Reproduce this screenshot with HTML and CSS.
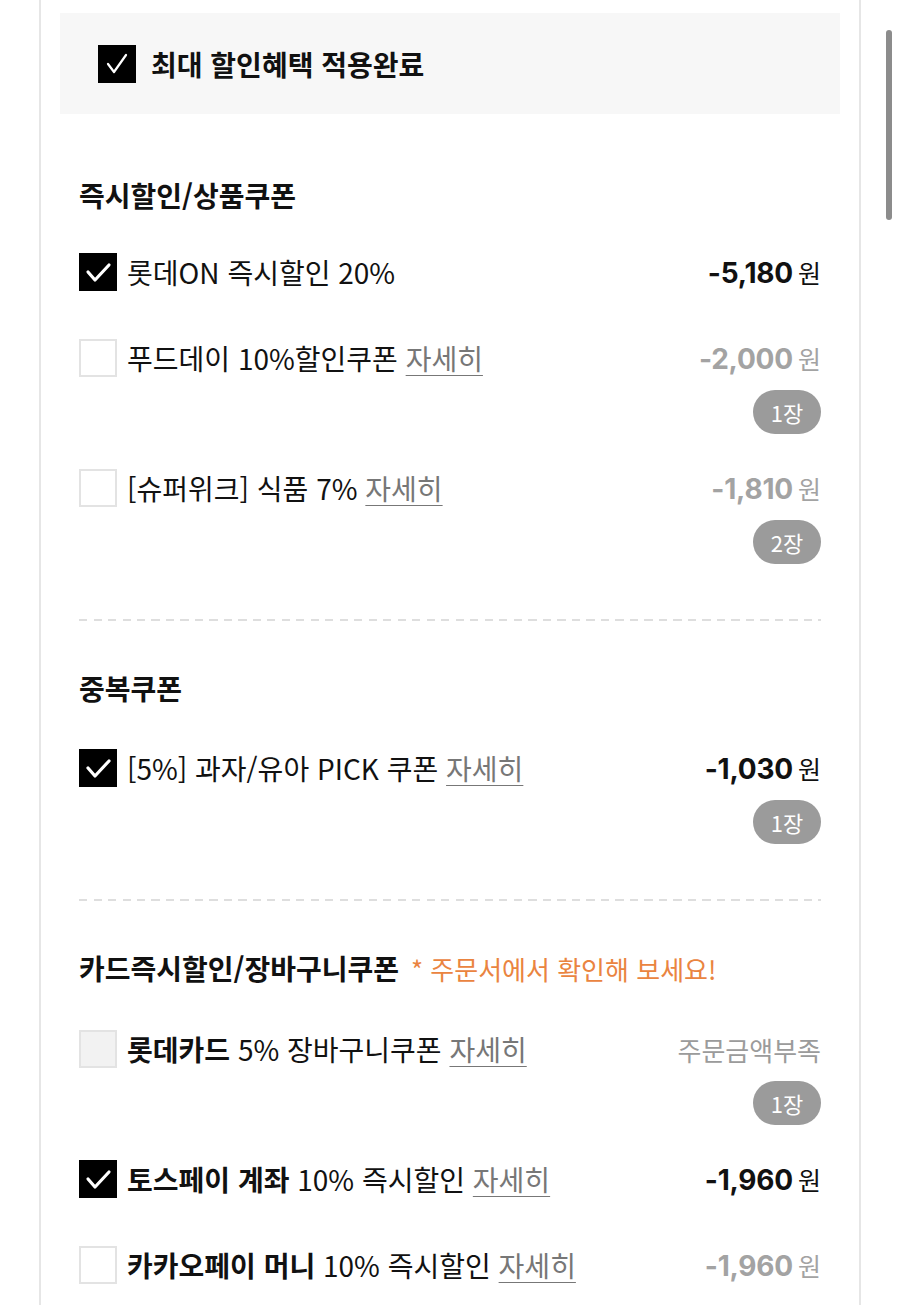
FILE: index.html
```html
<!DOCTYPE html>
<html lang="ko">
<head>
    <meta charset="UTF-8">
    <meta name="viewport" content="width=device-width, initial-scale=1.0">
    <title>할인 쿠폰 적용</title>
    <link rel="stylesheet" href="styles.css">
</head>
<body>

    <div class="panel">

        <div class="best-box">
            <span class="check is-on">
                <svg viewBox="0 0 38 38"><polyline points="10,19 16,27 28,10" fill="none" stroke="#fff" stroke-width="2.2" stroke-linecap="round" stroke-linejoin="round"/></svg>
            </span>
            <strong class="best-text">최대 할인혜택 적용완료</strong>
        </div>

        <!-- 즉시할인 / 상품쿠폰 -->
        <section class="group first">
            <h2 class="group-title">즉시할인/상품쿠폰</h2>
            <ul class="coupon-list">
                <li class="coupon">
                    <div class="coupon-row">
                        <span class="check is-on">
                            <svg viewBox="0 0 38 38"><polyline points="9,19 16,27 30,12" fill="none" stroke="#fff" stroke-width="3.2" stroke-linecap="round" stroke-linejoin="round"/></svg>
                        </span>
                        <span class="coupon-name">롯데ON 즉시할인 20%</span>
                        <span class="price"><b>-5,180</b>원</span>
                    </div>
                </li>
                <li class="coupon">
                    <div class="coupon-row">
                        <span class="check"></span>
                        <span class="coupon-name">푸드데이 10%할인쿠폰 <a href="#" class="more">자세히</a></span>
                        <span class="price is-off"><b>-2,000</b>원</span>
                    </div>
                    <div class="count-line"><span class="count">1장</span></div>
                </li>
                <li class="coupon">
                    <div class="coupon-row">
                        <span class="check"></span>
                        <span class="coupon-name">[슈퍼위크] 식품 7% <a href="#" class="more">자세히</a></span>
                        <span class="price is-off"><b>-1,810</b>원</span>
                    </div>
                    <div class="count-line"><span class="count">2장</span></div>
                </li>
            </ul>
        </section>

        <hr class="dash">

        <!-- 중복쿠폰 -->
        <section class="group">
            <h2 class="group-title">중복쿠폰</h2>
            <ul class="coupon-list">
                <li class="coupon">
                    <div class="coupon-row">
                        <span class="check is-on">
                            <svg viewBox="0 0 38 38"><polyline points="9,19 16,27 30,12" fill="none" stroke="#fff" stroke-width="3.2" stroke-linecap="round" stroke-linejoin="round"/></svg>
                        </span>
                        <span class="coupon-name">[5%] 과자/유아 PICK 쿠폰 <a href="#" class="more">자세히</a></span>
                        <span class="price"><b>-1,030</b>원</span>
                    </div>
                    <div class="count-line"><span class="count">1장</span></div>
                </li>
            </ul>
        </section>

        <hr class="dash">

        <!-- 카드즉시할인 / 장바구니쿠폰 -->
        <section class="group">
            <h2 class="group-title">카드즉시할인/장바구니쿠폰 <span class="notice">* 주문서에서 확인해 보세요!</span></h2>
            <ul class="coupon-list">
                <li class="coupon">
                    <div class="coupon-row">
                        <span class="check is-disabled"></span>
                        <span class="coupon-name"><strong>롯데카드</strong> 5% 장바구니쿠폰 <a href="#" class="more">자세히</a></span>
                        <span class="shortage">주문금액부족</span>
                    </div>
                    <div class="count-line"><span class="count">1장</span></div>
                </li>
                <li class="coupon">
                    <div class="coupon-row">
                        <span class="check is-on">
                            <svg viewBox="0 0 38 38"><polyline points="9,19 16,27 30,12" fill="none" stroke="#fff" stroke-width="3.2" stroke-linecap="round" stroke-linejoin="round"/></svg>
                        </span>
                        <span class="coupon-name"><strong>토스페이 계좌</strong> 10% 즉시할인 <a href="#" class="more">자세히</a></span>
                        <span class="price"><b>-1,960</b>원</span>
                    </div>
                </li>
                <li class="coupon">
                    <div class="coupon-row">
                        <span class="check"></span>
                        <span class="coupon-name"><strong>카카오페이 머니</strong> 10% 즉시할인 <a href="#" class="more">자세히</a></span>
                        <span class="price is-off"><b>-1,960</b>원</span>
                    </div>
                </li>
            </ul>
        </section>

    </div>

    <div class="scroll-thumb"></div>

</body>
</html>
```

FILE: styles.css
```css
body {
    font-family: "Noto Sans CJK KR", "Noto Sans", sans-serif;
    background-color: #fff;
    color: #111;
    margin: 0;
    padding: 0;
    height: 1305px;
    overflow: hidden;
}

.panel {
    width: 822px;
    margin-left: 39px;
    padding: 13px 19px 0;
    box-sizing: border-box;
    border-left: 2px solid #e6e6e6;
    border-right: 2px solid #e6e6e6;
    min-height: 1305px;
}

.best-box {
    display: flex;
    align-items: center;
    height: 101px;
    padding-left: 38px;
    background-color: #f7f7f7;
}

.best-text {
    margin-left: 15px;
    font-size: 28px;
    font-weight: 700;
}

.check {
    flex: none;
    width: 38px;
    height: 38px;
    box-sizing: border-box;
    border: 2px solid #e3e3e3;
    background-color: #fff;
}

    .check svg {
        display: block;
        width: 38px;
        height: 38px;
    }

    .check.is-on {
        border: none;
        background-color: #000;
    }

    .check.is-disabled {
        background-color: #f2f2f2;
        border-color: #e3e3e3;
    }

.group {
    padding: 0 19px;
}

    .group.first {
        margin-top: 63px;
    }

.group-title {
    margin: 49px 0 43px;
    font-size: 28px;
    line-height: 36px;
    font-weight: 700;
}

    .group.first .group-title {
        margin: 0 0 40px;
    }

.notice {
    margin-left: 4px;
    font-size: 26px;
    font-weight: 400;
    color: #ea8440;
}

.coupon-list {
    list-style: none;
    margin: 0;
    padding: 0;
    display: flex;
    flex-direction: column;
    gap: 35px;
}

.coupon-row {
    display: flex;
    align-items: center;
    height: 38px;
    padding-bottom: 13px;
}

.coupon-name {
    flex: 1;
    margin-left: 10px;
    font-size: 28px;
    line-height: 38px;
    white-space: nowrap;
}

    .coupon-name strong {
        font-weight: 700;
    }

.more {
    color: #777;
    text-decoration: underline;
    text-underline-offset: 5px;
    text-decoration-thickness: 1px;
}

.price {
    font-size: 25px;
    color: #111;
    white-space: nowrap;
}

    .price b {
        font-family: "Inter", "Liberation Sans", sans-serif;
        font-size: 28px;
        font-weight: 700;
        letter-spacing: -0.2px;
        margin-right: 5px;
    }

    .price.is-off {
        color: #a3a3a3;
    }

.shortage {
    font-size: 26px;
    color: #9b9b9b;
}

.count-line {
    display: flex;
    justify-content: flex-end;
}

.count {
    display: flex;
    align-items: center;
    justify-content: center;
    width: 68px;
    height: 44px;
    border-radius: 22px;
    background-color: #9b9b9b;
    color: #fff;
    font-size: 22px;
}

.dash {
    height: 2px;
    margin: 55px 19px 0;
    border: none;
    background: repeating-linear-gradient(to right, #dedede 0 8px, transparent 8px 14.5px);
}

.scroll-thumb {
    position: fixed;
    left: 886px;
    top: 30px;
    width: 6px;
    height: 190px;
    border-radius: 3px;
    background-color: #8c8c8c;
}
```
